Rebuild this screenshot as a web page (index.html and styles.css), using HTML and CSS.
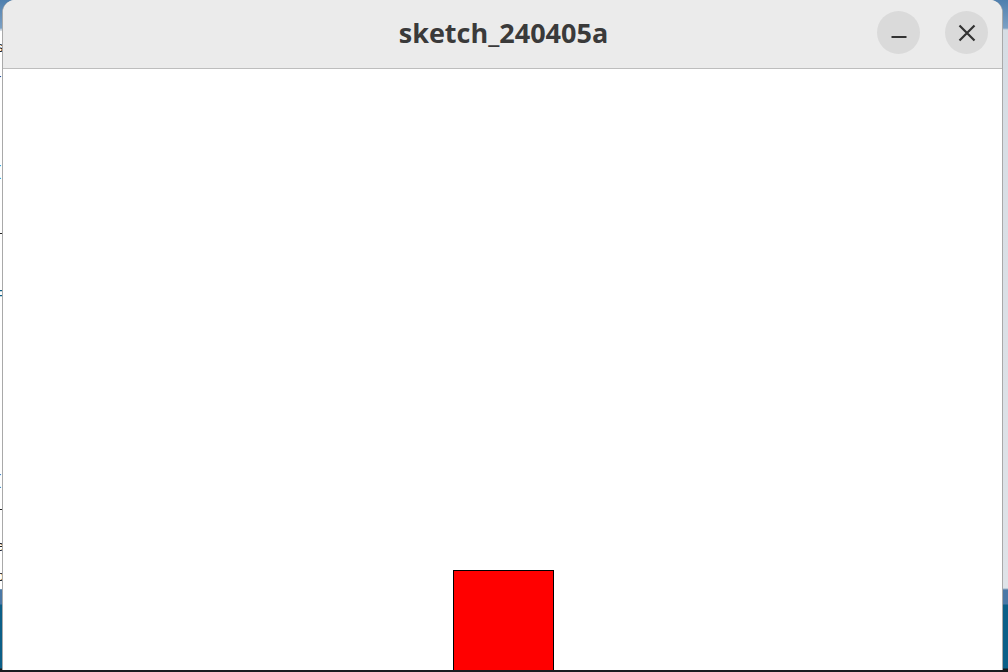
FILE: index.html
```html
<!DOCTYPE html>
<html>
<head>
<meta charset="utf-8">
<link rel="stylesheet" href="styles.css">
</head>
<body>
<div class="desktop">
  <div class="behind">
    <span class="frag f1">s</span>
    <span class="frag f2">r</span>
    <span class="frag f3">I</span>
    <span class="frag f4 blue">(</span>
    <span class="frag f5">–</span>
    <span class="frag f6 blue">F</span>
    <span class="frag f7">(</span>
    <span class="frag f8">–</span>
    <span class="frag f9">e</span>
    <span class="frag f10">p</span>
  </div>
  <div class="window">
    <header class="titlebar">
      <div class="title">sketch_240405a</div>
      <div class="controls">
        <button class="wbtn" aria-label="Minimize">
          <svg width="16" height="16" viewBox="0 0 16 16"><path d="M0.5 12 H15.5" stroke="#333" stroke-width="2"/></svg>
        </button>
        <button class="wbtn" aria-label="Close">
          <svg width="18" height="18" viewBox="0 0 18 18"><path d="M1.5 1.5 L16.5 16.5 M16.5 1.5 L1.5 16.5" stroke="#333" stroke-width="2.2"/></svg>
        </button>
      </div>
    </header>
    <div class="canvas">
      <div class="rect"></div>
    </div>
  </div>
  <div class="dock-edge"></div>
</div>
</body>
</html>
```
FILE: styles.css
```css
html, body {
  margin: 0;
  padding: 0;
  width: 1008px;
  height: 672px;
  overflow: hidden;
}

.desktop {
  position: relative;
  width: 1008px;
  height: 672px;
  background: linear-gradient(to bottom,
    #4f7fae 0px, #7ba0c4 28px, #d6dde4 30px, #dfe3e8 588px,
    #4a78a6 590px, #4a78a6 604px, #0b5f88 605px, #0b5f88 668px, #15191c 669px);
  font-family: "Open Sans", "DejaVu Sans", sans-serif;
}

.behind {
  position: absolute;
  left: 0;
  top: 31px;
  width: 3px;
  height: 558px;
  background: #ffffff;
  overflow: hidden;
}

.frag {
  position: absolute;
  left: -4px;
  font-family: "Liberation Sans", sans-serif;
  font-size: 15px;
  line-height: 16px;
  color: #222;
}
.frag.blue { color: #0b5f88; }
.f1 { top: 8px; }
.f2 { top: 40px; }
.f3 { top: 73px; }
.f4 { top: 132px; }
.f5 { top: 193px; }
.f6 { top: 256px; }
.f7 { top: 441px; }
.f8 { top: 469px; }
.f9 { top: 507px; }
.f10 { top: 537px; }

.window {
  position: absolute;
  left: 2px;
  top: 0;
  width: 1001px;
  height: 672px;
  box-sizing: border-box;
  border-left: 1px solid #a9a9a9;
  border-right: 1px solid #a9a9a9;
  border-radius: 13px 13px 0 0;
  background: #ffffff;
  display: flex;
  flex-direction: column;
  overflow: hidden;
}

.titlebar {
  flex: 0 0 auto;
  height: 68px;
  border-bottom: 1px solid #bdbdbd;
  background: #ebebeb;
  position: relative;
  display: flex;
  align-items: center;
  justify-content: center;
}

.title {
  font-family: "Open Sans", "DejaVu Sans", sans-serif;
  font-weight: 700;
  font-size: 27px;
  color: #3a3a3a;
  letter-spacing: 0px;
  margin-left: 2px;
  margin-top: -3px;
}

.controls {
  position: absolute;
  right: 14px;
  top: 11px;
  display: flex;
  gap: 25px;
}

.wbtn {
  width: 43px;
  height: 43px;
  border: none;
  border-radius: 50%;
  background: #dadada;
  padding: 0;
  display: flex;
  align-items: center;
  justify-content: center;
}

.canvas {
  flex: 1 1 auto;
  position: relative;
  background: #ffffff;
}

.rect {
  position: absolute;
  left: 450px;
  top: 501px;
  width: 99px;
  height: 99px;
  border: 1px solid #000;
  background: #ff0000;
}

.dock-edge {
  position: absolute;
  left: 0;
  bottom: 0;
  width: 1008px;
  height: 2px;
  background: #1a1d20;
}
```
